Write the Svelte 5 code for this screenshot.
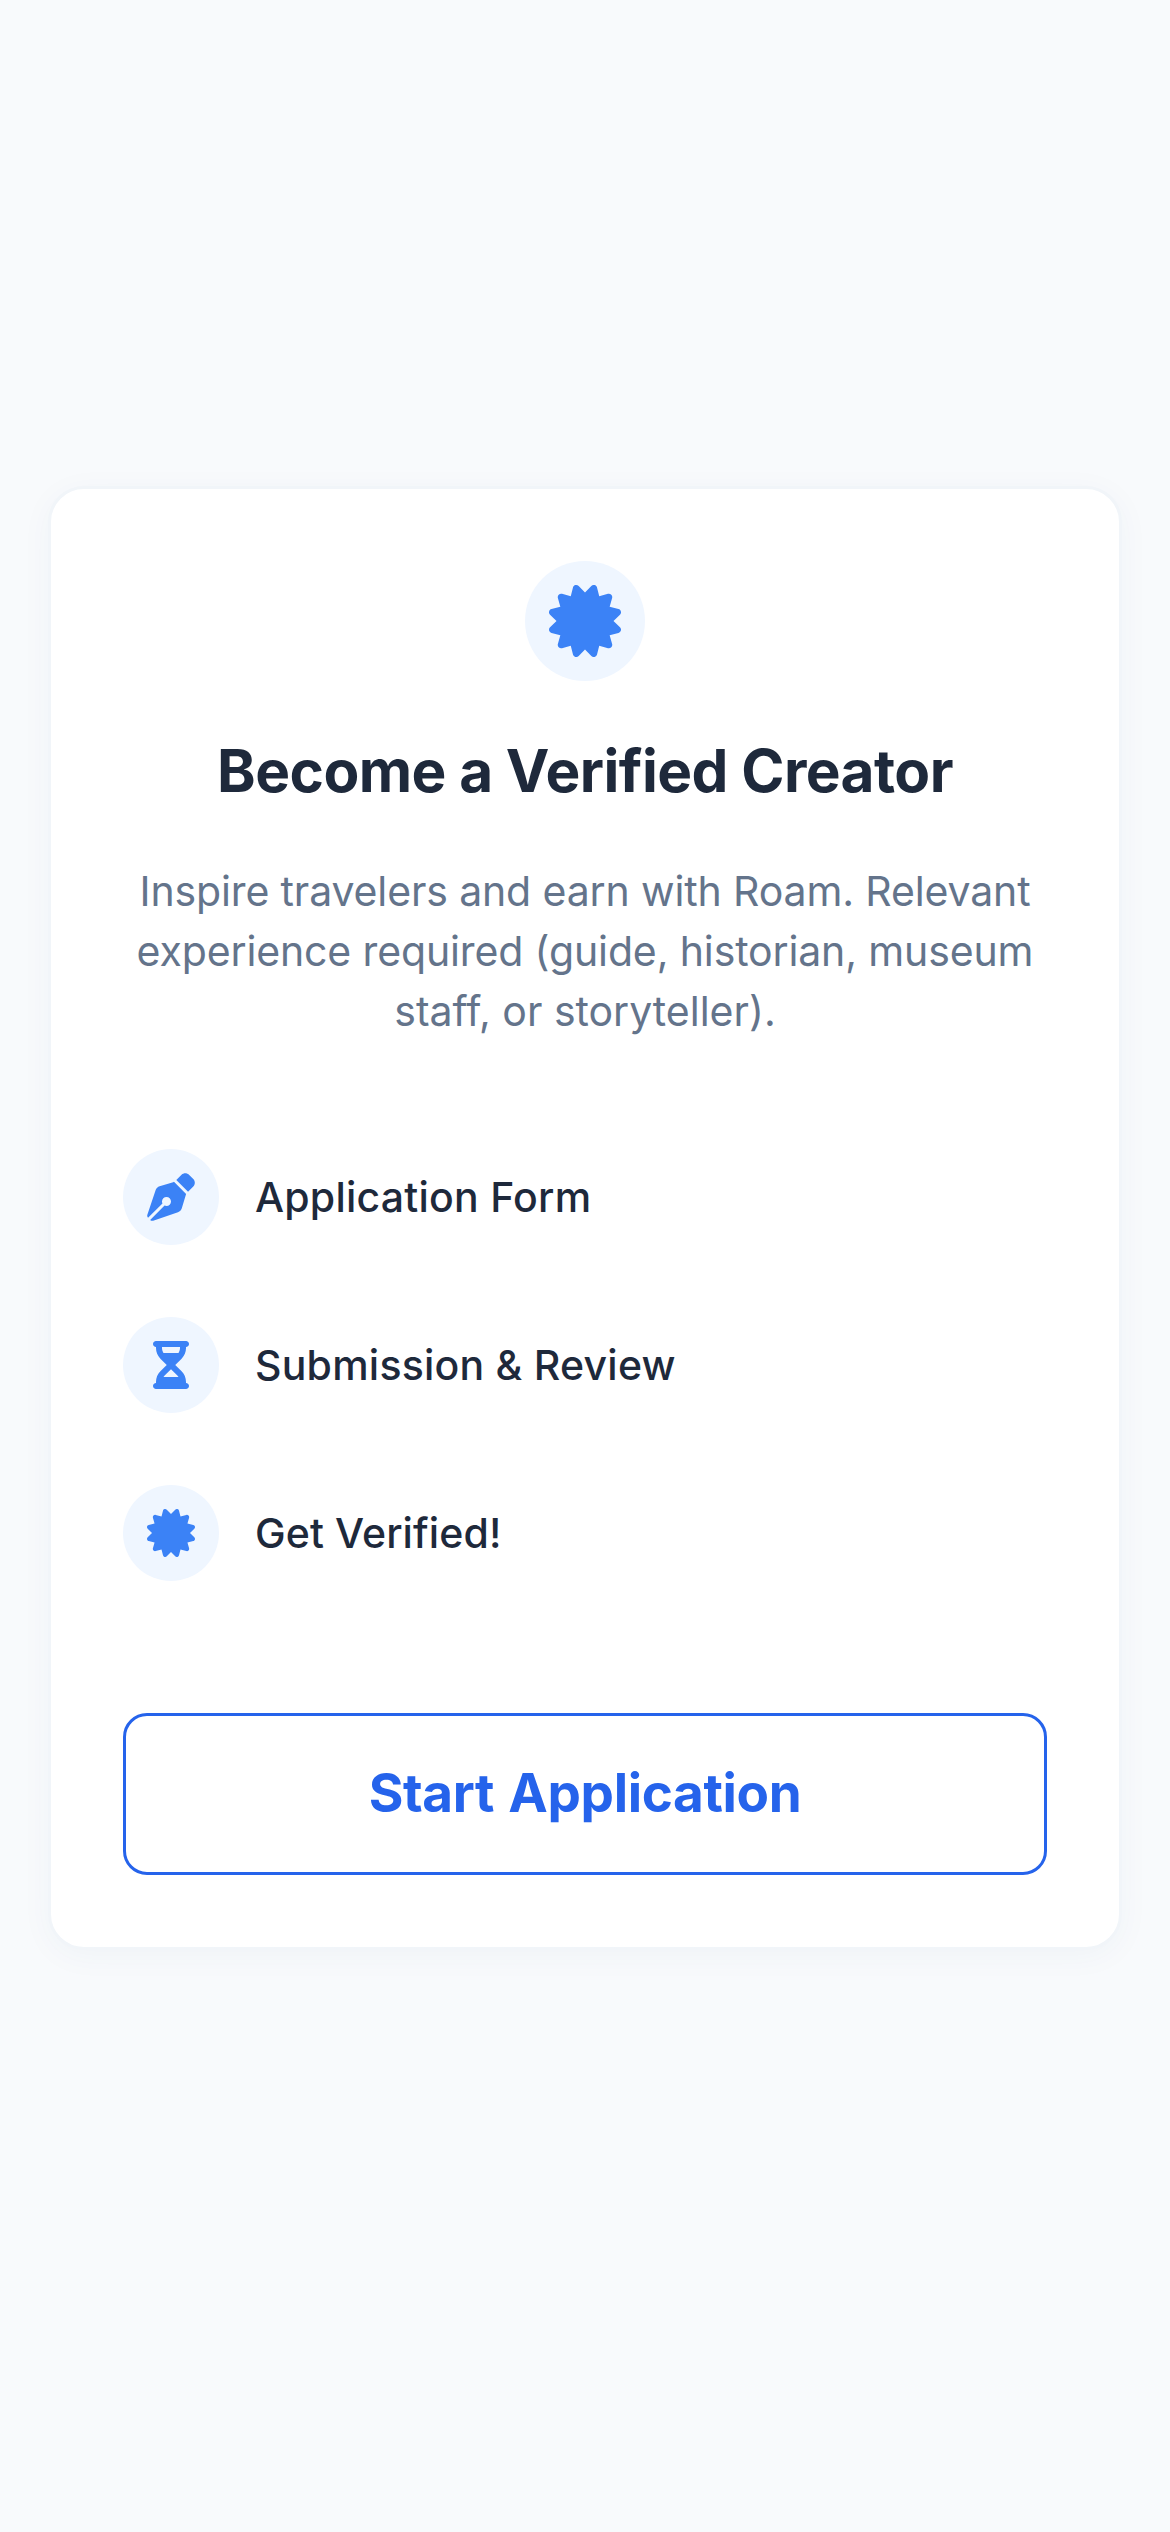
<script>
  const icons = {
    certificate: {
      box: '0 0 512 512',
      d: 'M211 7.3C205 1 196-1.4 187.6.8s-14.9 8.9-17.1 17.3L154.7 80.6l-62-17.5c-8.4-2.4-17.4 0-23.5 6.1s-8.5 15.1-6.1 23.5l17.5 62L18.1 170.6c-8.4 2.1-15 8.7-17.3 17.1S1 205 7.3 211l46.2 45L7.3 301C1 307-1.4 316 .8 324.4s8.9 14.9 17.3 17.1l62.5 15.8-17.5 62c-2.4 8.4 0 17.4 6.1 23.5s15.1 8.5 23.5 6.1l62-17.5 15.8 62.5c2.1 8.4 8.7 15 17.1 17.3s17.3-.2 23.4-6.4l45-46.2 45 46.2c6.1 6.2 15 8.7 23.4 6.4s14.9-8.9 17.1-17.3l15.8-62.5 62 17.5c8.4 2.4 17.4 0 23.5-6.1s8.5-15.1 6.1-23.5l-17.5-62 62.5-15.8c8.4-2.1 15-8.7 17.3-17.1s-.2-17.4-6.4-23.4l-46.2-45 46.2-45c6.2-6.1 8.7-15 6.4-23.4s-8.9-14.9-17.3-17.1l-62.5-15.8 17.5-62c2.4-8.4 0-17.4-6.1-23.5s-15.1-8.5-23.5-6.1l-62 17.5L341.4 18.1c-2.1-8.4-8.7-15-17.1-17.3S307 1 301 7.3L256 53.5 211 7.3z'
    },
    pen: {
      box: '0 0 512 512',
      d: 'M368.4 18.3L312.7 74.1 437.9 199.3l55.7-55.7c21.9-21.9 21.9-57.3 0-79.2L447.6 18.3c-21.9-21.9-57.3-21.9-79.2 0zM288 94.6l-9.2 2.8L134.7 140.6c-19.9 6-35.7 21.2-42.3 41L3.8 445.8c-3.8 11.3-1 23.9 7.3 32.4L164.7 324.7c-3-6.3-4.7-13.3-4.7-20.7c0-26.5 21.5-48 48-48s48 21.5 48 48s-21.5 48-48 48c-7.4 0-14.4-1.7-20.7-4.7L33.7 500.9c8.6 8.3 21.1 11.2 32.4 7.3l264.3-88.6c19.7-6.6 35-22.4 41-42.3l43.2-144.1 2.7-9.2L288 94.6z'
    },
    hourglass: {
      box: '-64 0 512 512',
      d: 'M32 0C14.3 0 0 14.3 0 32S14.3 64 32 64V75c0 42.4 16.9 83.1 46.9 113.1L146.7 256 78.9 323.9C48.9 353.9 32 394.6 32 437v11c-17.7 0-32 14.3-32 32s14.3 32 32 32H64 320h32c17.7 0 32-14.3 32-32s-14.3-32-32-32V437c0-42.4-16.9-83.1-46.9-113.1L237.3 256l67.9-67.9c30-30 46.9-70.7 46.9-113.1V64c17.7 0 32-14.3 32-32s-14.3-32-32-32H320 64 32zM96 75V64H288V75c0 19-5.6 37.4-16 53H112c-10.3-15.6-16-34-16-53zm16 309c3.5-5.3 7.6-10.3 12.1-14.9L192 301.3l67.9 67.9c4.6 4.6 8.6 9.6 12.1 14.9H112z'
    }
  };

  const steps = [
    { icon: icons.pen, label: 'Application Form', tone: 'form' },
    { icon: icons.hourglass, label: 'Submission & Review', tone: 'review' },
    { icon: icons.certificate, label: 'Get Verified!', tone: 'verified' }
  ];
</script>

{#snippet glyph(icon)}
  <svg viewBox={icon.box} aria-hidden="true"><path d={icon.d} /></svg>
{/snippet}

<main>
  <section class="card">
    <div class="badge hero">{@render glyph(icons.certificate)}</div>
    <h1>Become a Verified Creator</h1>
    <p>
      <span class="wide">Inspire travelers and earn with Roam. Relevant</span>
      <span class="wide">experience required (guide, historian, museum</span>
      <span>staff, or storyteller).</span>
    </p>
    <ul>
      {#each steps as step}
        <li>
          <div class="badge">{@render glyph(step.icon)}</div>
          <span class={step.tone}>{step.label}</span>
        </li>
      {/each}
    </ul>
    <button type="button">Start Application</button>
  </section>
</main>

<style>
  :global(body) {
    background: #f8fafc;
  }

  main {
    box-sizing: border-box;
    min-height: 2532px;
    padding: 486px 48px 0;
    background: #f8fafc;
    font-family: Inter, 'Liberation Sans', sans-serif;
    color: #1e293b;
  }

  .card {
    box-sizing: border-box;
    height: 1464px;
    padding: 72px;
    display: flex;
    flex-direction: column;
    align-items: center;
    background: #fff;
    border: 3px solid #f1f5f9;
    border-radius: 36px;
    box-shadow: 0 6px 32px rgba(30, 64, 120, 0.04);
  }

  .badge {
    flex: none;
    width: 96px;
    height: 96px;
    border-radius: 50%;
    background: #eff6ff;
    display: grid;
    place-items: center;
  }

  .badge :global(svg) {
    display: block;
    width: 48px;
    height: 48px;
    fill: #3b82f6;
  }

  .hero {
    width: 120px;
    height: 120px;
  }

  .hero :global(svg) {
    width: 72px;
    height: 72px;
  }

  h1 {
    margin: 54px 0 0;
    font-size: 58.5px;
    line-height: 72px;
    font-weight: 700;
    letter-spacing: -0.55px;
    white-space: nowrap;
  }

  p {
    margin: 54px 0 0;
    font-size: 41px;
    line-height: 60px;
    font-weight: 430;
    color: #64748b;
    text-align: center;
    white-space: nowrap;
  }

  p span {
    display: block;
  }

  .wide {
    letter-spacing: -0.13px;
  }

  ul {
    width: 100%;
    margin: 108px 0 0;
    padding: 0;
    list-style: none;
    display: flex;
    flex-direction: column;
    gap: 72px;
  }

  li {
    display: flex;
    align-items: center;
    gap: 36px;
    font-size: 41px;
    font-weight: 520;
    letter-spacing: 0.23px;
    white-space: nowrap;
  }

  .verified {
    letter-spacing: 0.1px;
  }

  button {
    box-sizing: border-box;
    width: 100%;
    height: 162px;
    margin: auto 0 0;
    padding: 0 0 2px;
    border: 3px solid #2563eb;
    border-radius: 24px;
    background: #fff;
    color: #2563eb;
    font: 700 53px/60px Inter, 'Liberation Sans', sans-serif;
    letter-spacing: -0.35px;
    word-spacing: 2px;
  }
</style>
